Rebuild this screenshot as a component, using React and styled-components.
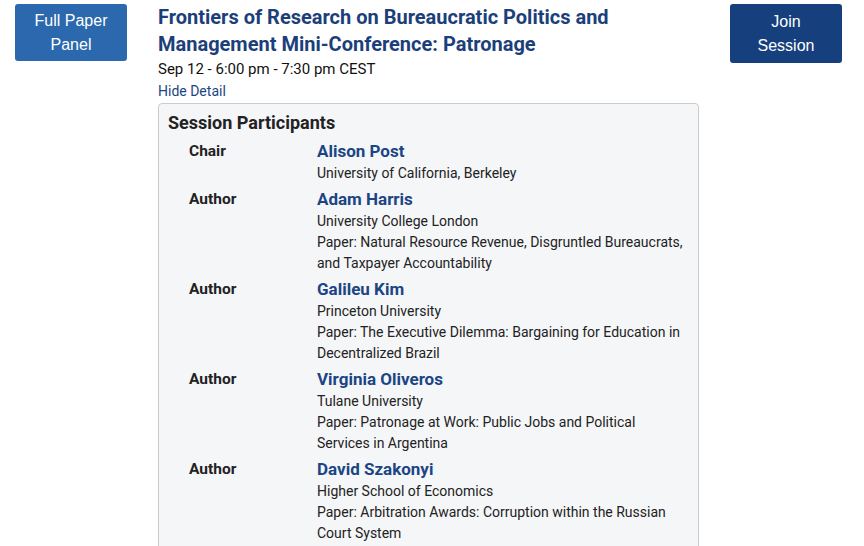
import React from "react";
import styled, { createGlobalStyle } from "styled-components";

const GlobalStyle = createGlobalStyle`
  body {
    margin: 0;
    background: #ffffff;
    font-family: Roboto, "Liberation Sans", Arial, sans-serif;
    color: #222222;
  }
`;

const Page = styled.div`
  display: grid;
  grid-template-columns: 112px 541px 112px;
  column-gap: 31px;
  align-items: start;
  padding: 4px 15px;
`;

const ActionButton = styled.button`
  width: 112px;
  height: ${(p) => p.$height}px;
  border: none;
  border-radius: 3px;
  background: ${(p) => p.$bg};
  color: #ffffff;
  font-family: "Liberation Sans", Arial, sans-serif;
  font-size: 16px;
  line-height: 24px;
  padding: 4px ${(p) => p.$padX}px;
  text-align: center;
  cursor: pointer;
`;

const Main = styled.div`
  display: flex;
  flex-direction: column;
`;

const Title = styled.h2`
  margin: 0;
  max-width: 480px;
  font-size: 20px;
  line-height: 27px;
  font-weight: 700;
  color: #1c3f7b;
`;

const When = styled.div`
  margin-top: 1px;
  font-size: 15px;
  line-height: 21px;
  color: #111111;
`;

const DetailLink = styled.a`
  font-size: 14px;
  line-height: 23px;
  color: #1b4584;
  text-decoration: none;
`;

const Box = styled.div`
  border: 1px solid #cbcbcb;
  border-radius: 4px;
  background: #f5f6f8;
  padding: 7px 10px 10px 9px;
`;

const BoxHeading = styled.h3`
  margin: 0 0 4px;
  font-size: 18px;
  line-height: 24px;
  font-weight: 700;
  color: #222222;
`;

const List = styled.div`
  display: flex;
  flex-direction: column;
  gap: 3px;
  padding-left: 21px;
`;

const Row = styled.div`
  display: grid;
  grid-template-columns: 128px 1fr;
`;

const Role = styled.div`
  font-size: 15.5px;
  line-height: 24px;
  font-weight: 700;
  color: #222222;
`;

const Info = styled.div`
  display: flex;
  flex-direction: column;
  padding-right: 2px;
`;

const Name = styled.a`
  font-size: 17px;
  line-height: 24px;
  font-weight: 700;
  color: #1b4584;
  text-decoration: none;
`;

const Line = styled.div`
  font-size: 14px;
  line-height: 21px;
  color: #222222;
`;

const participants = [
  { role: "Chair", name: "Alison Post", org: "University of California, Berkeley" },
  {
    role: "Author",
    name: "Adam Harris",
    org: "University College London",
    paper: "Natural Resource Revenue, Disgruntled Bureaucrats, and Taxpayer Accountability",
  },
  {
    role: "Author",
    name: "Galileu Kim",
    org: "Princeton University",
    paper: "The Executive Dilemma: Bargaining for Education in Decentralized Brazil",
  },
  {
    role: "Author",
    name: "Virginia Oliveros",
    org: "Tulane University",
    paper: "Patronage at Work: Public Jobs and Political Services in Argentina",
  },
  {
    role: "Author",
    name: "David Szakonyi",
    org: "Higher School of Economics",
    paper: "Arbitration Awards: Corruption within the Russian Court System",
  },
];

export default function App() {
  return (
    <>
      <GlobalStyle />
      <Page>
        <ActionButton $bg="#2b68ad" $height={57} $padX={10}>
          Full Paper Panel
        </ActionButton>
        <Main>
          <Title>
            Frontiers of Research on Bureaucratic Politics and Management
            Mini-Conference: Patronage
          </Title>
          <When>Sep 12 - 6:00 pm - 7:30 pm CEST</When>
          <DetailLink href="#">Hide Detail</DetailLink>
          <Box>
            <BoxHeading>Session Participants</BoxHeading>
            <List>
              {participants.map((p) => (
                <Row key={p.name}>
                  <Role>{p.role}</Role>
                  <Info>
                    <Name href="#">{p.name}</Name>
                    <Line>{p.org}</Line>
                    {p.paper && <Line>Paper: {p.paper}</Line>}
                  </Info>
                </Row>
              ))}
            </List>
          </Box>
        </Main>
        <ActionButton $bg="#153f7d" $height={59} $padX={24}>
          Join Session
        </ActionButton>
      </Page>
    </>
  );
}
